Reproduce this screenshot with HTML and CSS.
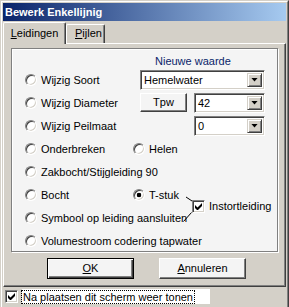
FILE: index.html
```html
<!DOCTYPE html>
<html lang="nl">
<head>
    <meta charset="UTF-8">
    <title>Bewerk Enkellijnig</title>
    <link rel="stylesheet" href="styles.css">
</head>
<body>
<div class="window">
  <div class="frame">
    <div class="titlebar">Bewerk Enkellijnig</div>

    <div class="tabs">
      <div class="tab active"><u>L</u>eidingen</div>
      <div class="tab"><u>P</u>ijlen</div>
    </div>

    <div class="panel">
      <div class="group">
        <div class="new-value">Nieuwe waarde</div>

        <div class="opt r2"><span class="radio"></span>Wijzig Soort</div>
        <div class="combo wide span-right r2"><span>Hemelwater</span><i class="drop"></i></div>

        <div class="opt r3"><span class="radio"></span>Wijzig Diameter</div>
        <div class="pair span-right r3">
          <div class="btn small">Tpw</div>
          <div class="combo narrow"><span>42</span><i class="drop"></i></div>
        </div>

        <div class="opt r4"><span class="radio"></span>Wijzig Peilmaat</div>
        <div class="combo narrow span-right push r4"><span>0</span><i class="drop"></i></div>

        <div class="opt r5"><span class="radio"></span>Onderbreken</div>
        <div class="opt r5 c2"><span class="radio"></span>Helen</div>

        <div class="opt full r6"><span class="radio"></span>Zakbocht/Stijgleiding 90</div>

        <div class="opt r7"><span class="radio"></span>Bocht</div>
        <div class="opt r7 c2"><span class="radio on"></span>T-stuk</div>
        <div class="check-opt">
          <span class="checkbox">
            <svg width="7" height="7" viewBox="0 0 7 7"><path d="M0 2v3l2 2h1l4-4V0L2.5 4.5z" fill="#000"/></svg>
          </span>Instortleiding
        </div>

        <div class="opt two r8"><span class="radio"></span>Symbool op leiding aansluiten</div>

        <div class="opt full r9"><span class="radio"></span>Volumestroom codering tapwater</div>

        <svg class="links" width="265" height="202">
          <line x1="174" y1="148" x2="180" y2="152" stroke="#000" stroke-width="1"/>
          <line x1="171.5" y1="172.5" x2="179.5" y2="163.5" stroke="#000" stroke-width="1"/>
        </svg>
      </div>

      <div class="actions">
        <div class="btn default"><u>O</u>K</div>
        <div class="btn"><u>A</u>nnuleren</div>
      </div>
    </div>

    <div class="footer">
      <span class="checkbox">
        <svg width="7" height="7" viewBox="0 0 7 7"><path d="M0 2v3l2 2h1l4-4V0L2.5 4.5z" fill="#000"/></svg>
      </span>
      <div class="footer-label"><span>Na plaatsen dit scherm weer tonen</span></div>
    </div>
  </div>
</div>
</body>
</html>
```

FILE: styles.css
```css
body {
    margin: 0;
    padding: 0;
    overflow: hidden;
    font-family: "Liberation Sans", Arial, sans-serif;
    font-size: 11px;
    color: #000;
}
.window {
    width: 289px;
    height: 312px;
    box-sizing: border-box;
    border: 1px solid;
    border-color: #d4d0c8 #404040 #404040 #d4d0c8;
    background: #d4d0c8;
}
.frame {
    height: 100%;
    box-sizing: border-box;
    border: 1px solid;
    border-color: #fff #808080 #808080 #fff;
}
.titlebar {
    margin: 1px 1px 0 1px;
    height: 18px;
    line-height: 18px;
    padding-left: 2px;
    background: linear-gradient(to right, #0a246a, #a6caf0);
    color: #fff;
    font-weight: bold;
}

/* tabs */
.tabs {
    display: flex;
    align-items: flex-end;
    height: 21px;
    margin: 1px 1px 0 1px;
}
.tab {
    box-sizing: border-box;
    height: 19px;
    line-height: 17px;
    padding: 0 6px;
    border: 1px solid;
    border-bottom: 0;
    border-color: #fff #404040 #fff #fff;
    border-radius: 2px 2px 0 0;
    box-shadow: inset -1px 0 0 #808080;
}
.tab.active {
    width: 63px;
    height: 22px;
    line-height: 21px;
    text-align: center;
    margin-bottom: -1px;
    position: relative;
    z-index: 1;
    background: #d4d0c8;
}
.tab:not(.active) {
    width: 39px;
    padding: 0 0 0 8px;
}

.panel {
    margin: 0 1px;
    height: 244px;
    box-sizing: border-box;
    border: 1px solid;
    border-color: #fff #404040 #404040 #fff;
    box-shadow: inset -1px -1px 0 #808080;
    padding: 4px 6px 0 7px;
}

/* option group */
.group {
    position: relative;
    width: 267px;
    height: 204px;
    box-sizing: border-box;
    border: 1px solid #808080;
    box-shadow: 1px 1px 0 #fff, inset 1px 1px 0 #fff;
    background: #f4f4f4;
    display: grid;
    grid-template-columns: 108px 59px 1fr;
    grid-template-rows: 19px repeat(8, 23px);
    align-content: start;
    padding-left: 13px;
}
.new-value {
    grid-column: 2 / 4;
    grid-row: 1;
    margin-left: 22px;
    align-self: end;
    line-height: 13px;
    color: #0a246a;
}
.r2 { grid-row: 2; }
.r3 { grid-row: 3; }
.r4 { grid-row: 4; }
.r5 { grid-row: 5; }
.r6 { grid-row: 6; }
.r7 { grid-row: 7; }
.r8 { grid-row: 8; }
.r9 { grid-row: 9; }

.opt {
    grid-column: 1;
    display: flex;
    align-items: center;
    white-space: nowrap;
}
.opt.c2 {
    grid-column: 2;
}
.opt.full {
    grid-column: 1 / 4;
}
.opt.two {
    grid-column: 1 / 3;
}
.span-right {
    grid-column: 2 / 4;
    align-self: center;
}
.radio {
    width: 12px;
    height: 12px;
    box-sizing: border-box;
    border-radius: 50%;
    border: 1px solid;
    border-color: #808080 #fff #fff #808080;
    box-shadow: inset 1px 1px 0 #404040, inset -1px -1px 0 #d4d0c8;
    background: #fff;
    margin-right: 4px;
}
.radio.on {
    background: radial-gradient(circle, #000 0, #000 2px, #fff 2.6px);
}

.combo {
    display: flex;
    align-items: center;
    height: 20px;
    box-sizing: border-box;
    padding: 2px;
    border: 1px solid;
    border-color: #808080 #fff #fff #808080;
    box-shadow: inset 1px 1px 0 #404040, inset -1px -1px 0 #d4d0c8;
    background: #fff;
}
.combo span {
    flex: 1;
    padding-left: 1px;
}
.combo.wide {
    width: 125px;
    margin-left: 7px;
}
.combo.narrow {
    width: 71px;
}
.combo.push {
    margin-left: 61px;
}
.drop {
    width: 15px;
    height: 14px;
    box-sizing: border-box;
    border: 1px solid;
    border-color: #d4d0c8 #404040 #404040 #d4d0c8;
    box-shadow: inset 1px 1px 0 #fff, inset -1px -1px 0 #808080;
    background: #d4d0c8;
    display: flex;
    align-items: center;
    justify-content: center;
}
.drop::before {
    content: "";
    width: 7px;
    height: 4px;
    background: #000;
    clip-path: polygon(0 0, 100% 0, 50% 100%);
}
.pair {
    display: flex;
    align-items: center;
    gap: 7px;
    margin-left: 7px;
}

.btn {
    box-sizing: border-box;
    text-align: center;
    background: #f4f4f4;
    border: 1px solid;
    border-color: #fff #404040 #404040 #fff;
    box-shadow: inset -1px -1px 0 #808080;
}
.btn.small {
    width: 47px;
    height: 19px;
    line-height: 17px;
}
.btn.default {
    border-color: #000;
    box-shadow: inset 1px 1px 0 #fff, inset -1px -1px 0 #404040, inset -2px -2px 0 #808080;
}

.check-opt {
    grid-column: 3;
    grid-row: 7 / 9;
    display: flex;
    align-items: center;
    white-space: nowrap;
}
.checkbox {
    width: 13px;
    height: 13px;
    box-sizing: border-box;
    border: 1px solid;
    border-color: #808080 #fff #fff #808080;
    box-shadow: inset 1px 1px 0 #404040, inset -1px -1px 0 #d4d0c8;
    background: #fff;
    display: flex;
    align-items: center;
    justify-content: center;
    margin-right: 4px;
}
.checkbox svg {
    display: block;
}
.links {
    position: absolute;
    left: 0;
    top: 0;
    pointer-events: none;
}

.actions {
    display: flex;
    gap: 25px;
    margin: 6px 0 0 36px;
}
.actions .btn {
    width: 87px;
    height: 21px;
    line-height: 19px;
}

.footer {
    display: flex;
    align-items: center;
    margin: 2px 0 0 3px;
    height: 15px;
}
.footer-label {
    width: 188px;
    height: 15px;
    background: #fff;
    display: flex;
    align-items: center;
}
.footer-label span {
    outline: 1px dotted #000;
    outline-offset: 0;
    line-height: 12px;
    padding: 0 1px 0 1px;
    white-space: nowrap;
}
```
